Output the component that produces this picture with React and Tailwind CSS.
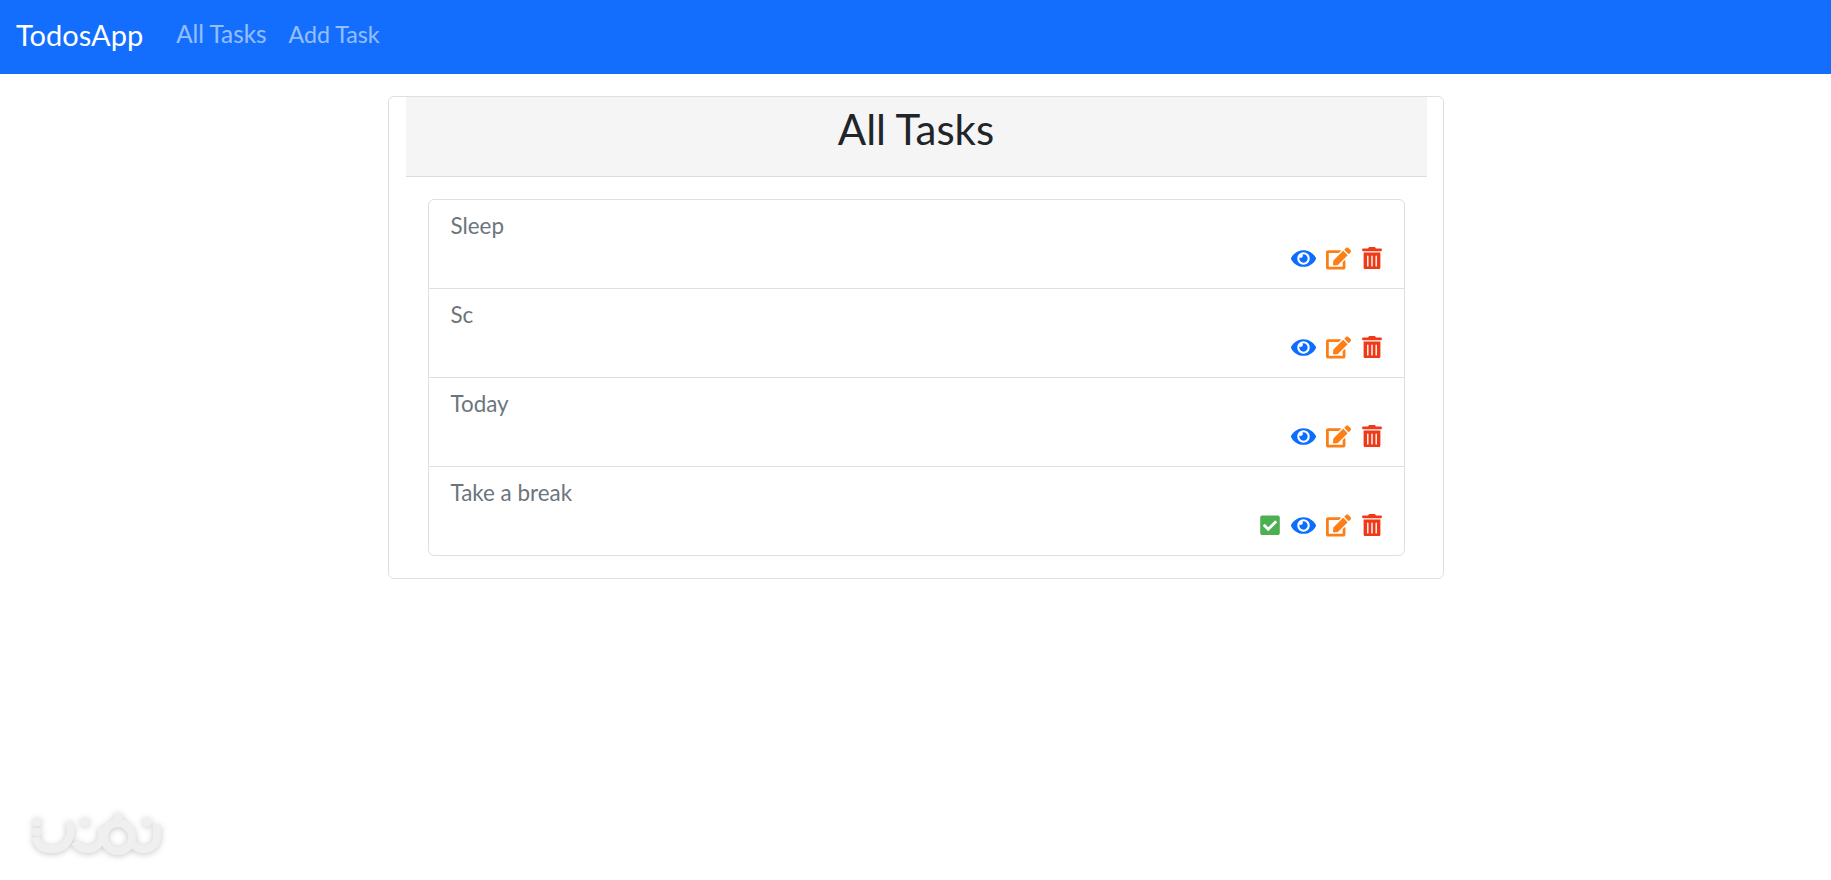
import React from 'react';
import { FaCheckSquare, FaEdit, FaEye, FaTrashAlt } from 'react-icons/fa';

const tasks = [
    { id: 1, title: 'Sleep', done: false },
    { id: 2, title: 'Sc', done: false },
    { id: 3, title: 'Today', done: false },
    { id: 4, title: 'Take a break', done: true },
];

// site logo that sits over the bottom left corner
const Watermark = () => (
    <svg
        className="absolute left-0 bottom-0 w-[200px] h-[90px]"
        viewBox="0 0 200 90"
        fill="none"
        stroke="#efefef"
        strokeWidth="8"
        style={{ filter: 'drop-shadow(0 1px 3px rgba(0,0,0,0.22))' }}
    >
        <path d="M36 47a13 13 0 0 0 14 12a18 18 0 0 0 18-27" />
        <path d="M75 52a14 14 0 0 0 13 7a14 14 0 0 0 14-14v-8" />
        <circle cx="118" cy="47" r="14" />
        <path d="M133 54a14 14 0 0 0 13 5a12 12 0 0 0 11-12v-12" />
        <g fill="#efefef" stroke="none">
            <circle cx="37" cy="32" r="4.5" />
            <circle cx="37" cy="42" r="4.5" />
            <circle cx="85" cy="32" r="4.5" />
            <circle cx="118" cy="28" r="5" />
            <circle cx="147" cy="32" r="4.5" />
        </g>
    </svg>
);

const TaskRow = ({ task }) => (
    <li className="h-[89px] px-[22px] pt-[10px] border-b border-[#dfdfdf] last:border-b-0 last:h-[88px]">
        <div className="text-[22.4px] leading-[32px] text-[#6c757d]">{task.title}</div>
        <div className="flex justify-end items-center h-[26px] mt-[3px]">
            {task.done && <FaCheckSquare className="w-[20px] h-[22.4px] text-[#4caf50] mr-[11px]" />}
            <FaEye className="w-[25px] h-[25px] text-[#0d6efd] mr-[10px]" />
            <FaEdit className="w-[25px] h-[25px] text-[#fd7e14] mr-[11px]" />
            <FaTrashAlt className="w-[20px] h-[22.4px] text-[#f03a17]" />
        </div>
    </li>
);

const App = () => {
    return (
        <div className="relative min-h-[880px] bg-white font-['Lato','Noto_Sans',sans-serif]">
            <nav className="flex items-center h-[74px] bg-[#136efd] px-[16px] pb-[5px]">
                <a className="text-[29px] text-white mr-[33px]">TodosApp</a>
                <a className="text-[24.3px] text-white/55 mr-[22px]">All Tasks</a>
                <a className="text-[23.2px] text-white/55">Add Task</a>
            </nav>

            <div className="w-[1056px] mx-auto mt-[22px] pl-[17px] pr-[16px] pb-[22px] border border-[#dfdfdf] rounded-[6px]">
                <div className="h-[80px] bg-[#f5f5f5] border-b border-[#dcdcdc] flex items-center justify-center pb-[16px]">
                    <h1 className="text-[42px] leading-[50px] text-[#212529]">All Tasks</h1>
                </div>
                <ul className="mx-[22px] mt-[22px] border border-[#dfdfdf] rounded-[6px]">
                    {tasks.map((task) => (
                        <TaskRow key={task.id} task={task} />
                    ))}
                </ul>
            </div>

            <Watermark />
        </div>
    );
};

export default App;
